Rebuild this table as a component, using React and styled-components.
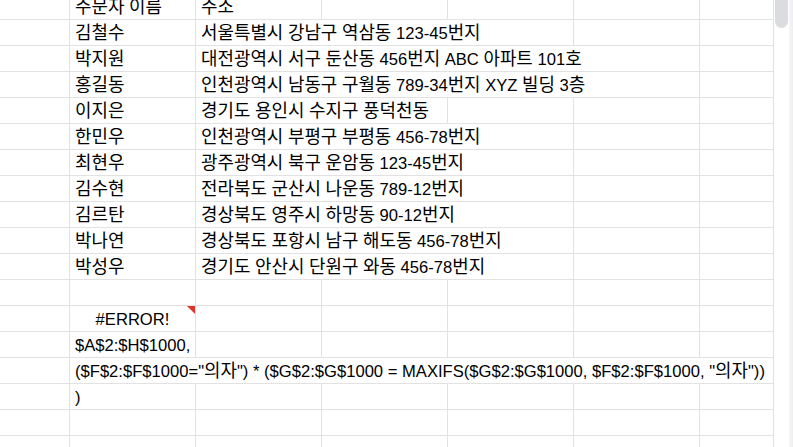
import styled, { createGlobalStyle } from 'styled-components';

const GlobalStyle = createGlobalStyle`
  html, body {
    margin: 0;
    padding: 0;
    background: #ffffff;
    overflow: hidden;
  }
  * {
    box-sizing: border-box;
  }
`;

const COLS = '70px 126px 126px 126px 126px 126px 74px';

const Page = styled.div`
  width: 793px;
  height: 447px;
  display: flex;
  overflow: hidden;
  background: #fff;
  font-family: 'Liberation Sans', 'Noto Sans CJK KR', Arial, sans-serif;
  font-size: 16.6px;
  color: #000;
`;

const Viewport = styled.div`
  width: 774px;
  height: 447px;
  overflow: hidden;
`;

// scrolled a few px down, so the header row is cut at the top
const Sheet = styled.div`
  margin-top: -6px;
`;

const Row = styled.div`
  display: grid;
  grid-template-columns: ${COLS};
  height: 26px;
`;

const Cell = styled.div`
  position: relative;
  grid-column: span ${(p) => p.$span || 1};
  display: flex;
  align-items: flex-end;
  justify-content: ${(p) => (p.$center ? 'center' : 'flex-start')};
  padding: 0 5px 1px;
  border-right: 1px solid #e2e2e2;
  border-bottom: 1px solid #e2e2e2;
  white-space: nowrap;
  line-height: 20px;
`;

const Text = styled.span`
  white-space: pre;
`;

// hangul runs, a touch larger like the sheet's korean fallback
const Hangul = styled.span`
  font-family: 'Noto Sans CJK KR', sans-serif;
  font-size: 17.9px;
`;

const ErrorFlag = styled.span`
  position: absolute;
  top: 0;
  right: 0;
  width: 8px;
  height: 8px;
  background: #e0332a;
  clip-path: polygon(0 0, 100% 0, 100% 100%);
`;

const Scrollbar = styled.div`
  width: 19px;
  height: 447px;
  display: flex;
  padding-left: 1px;
`;

const Thumb = styled.div`
  width: 14px;
  height: 28px;
  background: #dadce0;
  border-radius: 0 0 7px 7px;
`;

const Track = styled.div`
  margin-left: 1px;
  width: 4px;
  height: 100%;
  background: linear-gradient(to right, #f6f6f6, #eeeeee);
`;

const orders = [
  ['김철수', '서울특별시 강남구 역삼동 123-45번지', 3],
  ['박지원', '대전광역시 서구 둔산동 456번지 ABC 아파트 101호', 4],
  ['홍길동', '인천광역시 남동구 구월동 789-34번지 XYZ 빌딩 3층', 4],
  ['이지은', '경기도 용인시 수지구 풍덕천동', 2],
  ['한민우', '인천광역시 부평구 부평동 456-78번지', 3],
  ['최현우', '광주광역시 북구 운암동 123-45번지', 3],
  ['김수현', '전라북도 군산시 나운동 789-12번지', 3],
  ['김르탄', '경상북도 영주시 하망동 90-12번지', 3],
  ['박나연', '경상북도 포항시 남구 해도동 456-78번지', 3],
  ['박성우', '경기도 안산시 단원구 와동 456-78번지', 3],
];

const T = ({ children }) => (
  <Text>
    {children
      .split(/([\uAC00-\uD7A3]+)/)
      .map((part, i) =>
        /[\uAC00-\uD7A3]/.test(part) ? <Hangul key={i}>{part}</Hangul> : part
      )}
  </Text>
);

// fills the rest of a row with empty cells
const Blank = ({ n }) =>
  Array.from({ length: n }).map((_, i) => <Cell key={'b' + i} />);

const App = () => {
  return (
    <Page>
      <GlobalStyle />
      <Viewport>
        <Sheet>
          <Row>
            <Cell />
            <Cell><T>주문자 이름</T></Cell>
            <Cell><T>주소</T></Cell>
            <Blank n={4} />
          </Row>

          {orders.map(([name, addr, span]) => (
            <Row key={name}>
              <Cell />
              <Cell><T>{name}</T></Cell>
              <Cell $span={span}><T>{addr}</T></Cell>
              <Blank n={5 - span} />
            </Row>
          ))}

          <Row>
            <Blank n={7} />
          </Row>

          {/* formula pasted over several rows */}
          <Row>
            <Cell />
            <Cell $center>
              #ERROR!
              <ErrorFlag />
            </Cell>
            <Blank n={5} />
          </Row>
          <Row>
            <Cell />
            <Cell>$A$2:$H$1000,</Cell>
            <Blank n={5} />
          </Row>
          <Row>
            <Cell />
            <Cell $span={6}>
              <T>{'($F$2:$F$1000="의자") * ($G$2:$G$1000 = MAXIFS($G$2:$G$1000, $F$2:$F$1000, "의자"))'}</T>
            </Cell>
          </Row>
          <Row>
            <Cell />
            <Cell>)</Cell>
            <Blank n={5} />
          </Row>
          <Row>
            <Blank n={7} />
          </Row>
          <Row>
            <Blank n={7} />
          </Row>
        </Sheet>
      </Viewport>
      <Scrollbar>
        <Thumb />
        <Track />
      </Scrollbar>
    </Page>
  );
};

export default App;
